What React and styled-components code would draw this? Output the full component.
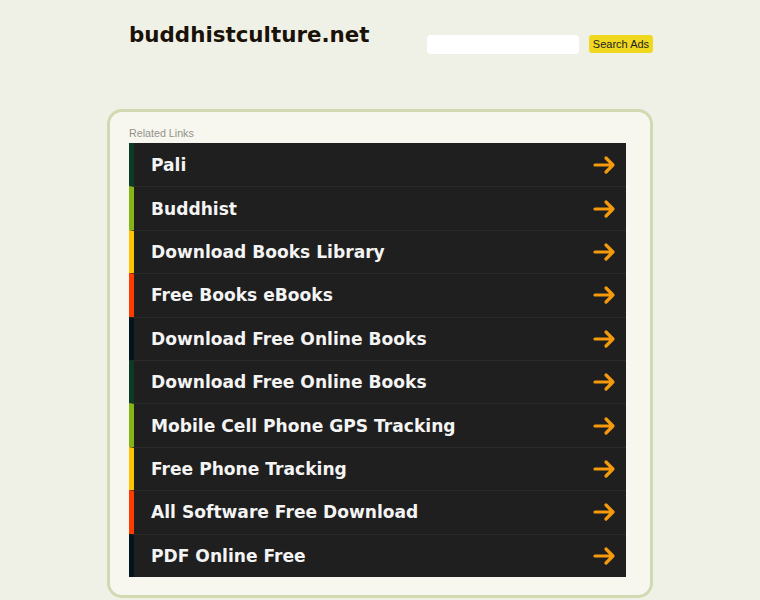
import React from "react";
import styled, { createGlobalStyle } from "styled-components";

const Global = createGlobalStyle`
  body {
    margin: 0;
    background: #f0f1e6;
    font-family: "DejaVu Sans", sans-serif;
  }
`;

const Page = styled.div`
  width: 546px;
  margin: 0 auto;
`;

const Header = styled.div`
  display: flex;
  align-items: flex-start;
  height: 109px;
  padding-left: 22px;
  box-sizing: border-box;
`;

const Logo = styled.a`
  font-family: "DejaVu Sans", sans-serif;
  font-weight: bold;
  font-size: 21.4px;
  color: #1a1209;
  margin-top: 22px;
  text-decoration: none;
`;

const Search = styled.form`
  display: flex;
  margin-left: auto;
  margin-top: 35px;
  gap: 10px;
`;

const Input = styled.input`
  width: 152px;
  height: 19px;
  border: none;
  border-radius: 4px;
  background: #fff;
  padding: 0;
`;

const Button = styled.button`
  width: 64px;
  height: 18px;
  padding: 0;
  border: none;
  border-radius: 3px;
  background: #efd81f;
  color: #222;
  font-family: "Liberation Sans", Arial, sans-serif;
  font-size: 11px;
`;

const Panel = styled.div`
  border: 3px solid #d0d9b2;
  border-radius: 15px;
  background: #f7f7f0;
  padding: 15px 24px 18px 19px;
`;

const Label = styled.div`
  font-family: "Liberation Sans", Arial, sans-serif;
  font-size: 10.7px;
  color: #929288;
  margin-bottom: 4px;
`;

const List = styled.div`
  background: #1f1f1f;
`;

const Row = styled.a`
  display: flex;
  align-items: center;
  height: 43.4px;
  box-sizing: border-box;
  border-top: 1px solid #2a2a2a;
  border-left: 5px solid ${p => p.$bar};
  padding-left: 17px;
  padding-right: 9px;
  color: #f4f4f4;
  font-weight: bold;
  font-size: 17.1px;
  text-decoration: none;
  &:first-child {
    border-top: none;
  }
`;

const Text = styled.span`
  flex: 1;
`;

const Arrow = () => (
  <svg width="24" height="20" viewBox="0 0 24 20">
    <path
      d="M2 10 H20 M13 3 L20 10 L13 17"
      fill="none"
      stroke="#f59a0c"
      strokeWidth="3.2"
      strokeLinecap="round"
      strokeLinejoin="round"
    />
  </svg>
);

const bars = ["#0b3b25", "#84b514", "#ffc300", "#ff3b00", "#04141f"];

const links = [
  "Pali",
  "Buddhist",
  "Download Books Library",
  "Free Books eBooks",
  "Download Free Online Books",
  "Download Free Online Books",
  "Mobile Cell Phone GPS Tracking",
  "Free Phone Tracking",
  "All Software Free Download",
  "PDF Online Free",
];

export default function App() {
  return (
    <Page>
      <Global />
      <Header>
        <Logo>buddhistculture.net</Logo>
        <Search onSubmit={e => e.preventDefault()}>
          <Input />
          <Button>Search Ads</Button>
        </Search>
      </Header>
      <Panel>
        <Label>Related Links</Label>
        <List>
          {links.map((t, i) => (
            <Row key={i} $bar={bars[i % 5]}>
              <Text>{t}</Text>
              <Arrow />
            </Row>
          ))}
        </List>
      </Panel>
    </Page>
  );
}
